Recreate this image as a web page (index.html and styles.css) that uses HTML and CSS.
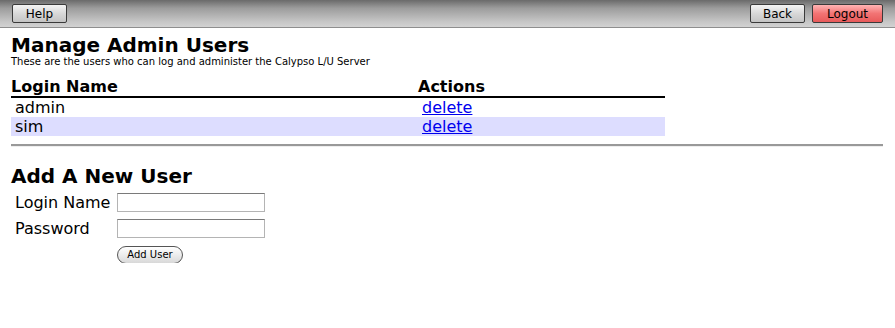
FILE: index.html
```html
<!DOCTYPE html>
<html lang="en">
<head>
  <meta charset="UTF-8">
  <title>Manage Admin Users</title>
  <link rel="stylesheet" href="styles.css">
</head>
<body>
  <!-- Top toolbar -->
  <div class="toolbar">
    <button class="tb-btn">Help</button>
    <div class="tb-right">
      <button class="tb-btn">Back</button>
      <button class="tb-btn logout">Logout</button>
    </div>
  </div>

  <div class="content">
    <h1>Manage Admin Users</h1>
    <div class="subtitle">These are the users who can log and administer the Calypso L/U Server</div>

    <table class="users">
      <thead>
        <tr>
          <th class="col-name">Login Name</th>
          <th>Actions</th>
        </tr>
      </thead>
      <tbody>
        <tr>
          <td>admin</td>
          <td><a href="#">delete</a></td>
        </tr>
        <tr class="alt">
          <td>sim</td>
          <td><a href="#">delete</a></td>
        </tr>
      </tbody>
    </table>

    <hr>

    <h1 class="add-title">Add A New User</h1>
    <form class="add-form">
      <label>Login Name</label>
      <input type="text">
      <label>Password</label>
      <input type="password">
      <span></span>
      <div><button type="button" class="add-btn">Add User</button></div>
    </form>
  </div>
</body>
</html>
```

FILE: styles.css
```css
body {
  margin: 0;
  font-family: "DejaVu Sans", Verdana, sans-serif;
  background: #fff;
  color: #000;
}

/* Toolbar */
.toolbar {
  height: 28px;
  box-sizing: border-box;
  padding: 0 12px 0 12px;
  display: flex;
  align-items: center;
  justify-content: space-between;
  background: linear-gradient(to bottom, #6a6a6a, #9c9c9c 30%, #c6c6c6 80%, #d2d2d2);
  border-bottom: 1px solid #8e8e8e;
}

.tb-right {
  display: flex;
  gap: 7px;
}

.tb-btn {
  height: 19px;
  min-width: 55px;
  padding: 0 6px;
  font-family: "DejaVu Sans", Verdana, sans-serif;
  font-size: 12px;
  color: #000;
  border: 1px solid #3a3a3a;
  border-radius: 2px;
  background: linear-gradient(to bottom, #f4f4f4, #d8d8d8 50%, #c4c4c4);
}

.logout {
  min-width: 71px;
  background: linear-gradient(to bottom, #ffb4b4, #f27474 50%, #e85a5a);
}

/* Main content */
.content {
  padding: 0 12px 0 11px;
}

h1 {
  font-size: 20px;
  font-weight: bold;
  margin: 5px 0 0 0;
  line-height: 24px;
}

.subtitle {
  font-size: 10px;
  line-height: 10px;
}

.users {
  width: 654px;
  border-collapse: collapse;
  margin-top: 11px;
}

.users th {
  text-align: left;
  font-size: 16px;
  font-weight: bold;
  line-height: 18px;
  padding: 0;
  border-bottom: 2px solid #000;
}

.users .col-name {
  width: 407px;
}

.users td {
  font-size: 16px;
  line-height: 19px;
  padding: 0 0 0 4px;
}

.users tr.alt td {
  background: #ddddff;
}

.users a {
  color: #0000ee;
}

hr {
  margin: 8px 0 0 0;
  border: 0;
  border-top: 2px solid #999;
  border-bottom: 1px solid #eee;
}

.add-title {
  margin-top: 17px;
}

.add-form {
  display: grid;
  grid-template-columns: 102px 148px;
  grid-template-rows: 19px 19px 18px;
  row-gap: 7px;
  align-items: center;
  padding-left: 4px;
  margin-top: 5px;
}

.add-form label {
  font-size: 16px;
  line-height: 19px;
}

.add-form input {
  height: 19px;
  box-sizing: border-box;
  border: 1px solid #b4b4b4;
  border-top-color: #7a7a7a;
  padding: 0 2px;
  font-size: 12px;
}

.add-btn {
  display: block;
  margin-top: 1px;
  height: 18px;
  width: 66px;
  padding: 0;
  font-family: "DejaVu Sans", Verdana, sans-serif;
  font-size: 10px;
  border: 1px solid #555;
  border-radius: 9px;
  background: linear-gradient(to bottom, #ffffff, #ececec 50%, #d8d8d8);
}
```
